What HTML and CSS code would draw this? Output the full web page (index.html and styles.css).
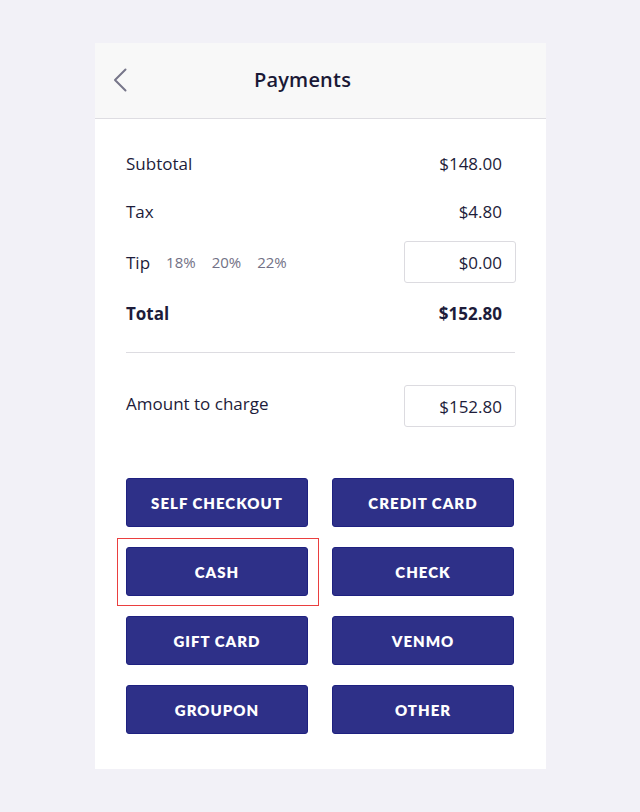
FILE: index.html
```html
<!DOCTYPE html>
<html>
<head>
<meta charset="utf-8">
<link rel="stylesheet" href="styles.css">
</head>
<body>
<div class="card">
  <header class="header">
    <button class="back" aria-label="Back">
      <svg width="14" height="24" viewBox="0 0 14 24"><path d="M12.5 1.5 L2 12 L12.5 22.5" fill="none" stroke="#77768a" stroke-width="2" stroke-linecap="round" stroke-linejoin="round"/></svg>
    </button>
    <h1 class="title">Payments</h1>
  </header>
  <div class="content">
    <div class="summary">
      <div class="row"><span>Subtotal</span><span class="val">$148.00</span></div>
      <div class="row"><span>Tax</span><span class="val">$4.80</span></div>
      <div class="row tip-row">
        <div class="tip-left"><span>Tip</span><span class="pct">18%</span><span class="pct">20%</span><span class="pct">22%</span></div>
        <div class="field">$0.00</div>
      </div>
      <div class="row total"><span>Total</span><span class="val">$152.80</span></div>
    </div>
    <hr class="divider">
    <div class="row charge-row">
      <span class="charge-label">Amount to charge</span>
      <div class="field">$152.80</div>
    </div>
    <div class="buttons">
      <button class="pay">SELF CHECKOUT</button>
      <button class="pay">CREDIT CARD</button>
      <div class="selected-wrap"><button class="pay">CASH</button><span class="ring"></span></div>
      <button class="pay">CHECK</button>
      <button class="pay">GIFT CARD</button>
      <button class="pay">VENMO</button>
      <button class="pay">GROUPON</button>
      <button class="pay">OTHER</button>
    </div>
  </div>
</div>
</body>
</html>
```
FILE: styles.css
```css
* { box-sizing: border-box; }
html, body { margin: 0; padding: 0; }
body {
  background: #f2f1f7;
  font-family: "Open Sans", Lato, sans-serif;
  color: #1d1c3a;
  padding-top: 43px;
  padding-left: 95px;
}
.card {
  width: 451px;
  height: 726px;
  background: #ffffff;
}
.header {
  height: 76px;
  background: #f8f8f8;
  border-bottom: 1px solid #dedde2;
  display: flex;
  align-items: center;
  position: relative;
  justify-content: center;
}
.back {
  position: absolute;
  left: 18px;
  top: 25px;
  background: none;
  border: 0;
  padding: 0;
  display: flex;
}
.title {
  margin: 0 36px 3px 0;
  font-size: 20px;
  font-weight: 600;
  letter-spacing: 0.2px;
  color: #1a1936;
}
.content {
  padding: 20px 30px 0 31px;
}
.row {
  display: flex;
  justify-content: space-between;
  align-items: center;
  font-size: 17px;
}
.val { padding-right: 14px; }
.summary .row { height: 48px; }
.summary .tip-row { height: 54px; }
.tip-left { display: flex; align-items: center; }
.pct {
  font-size: 15px;
  color: #727185;
  margin-left: 16px;
}
.tip-left .pct:first-of-type { margin-left: 20px; }
.field {
  width: 112px;
  height: 42px;
  border: 1px solid #dcdbe0;
  border-radius: 3px;
  display: flex;
  align-items: center;
  justify-content: flex-end;
  padding-right: 13px;
  font-size: 17px;
}
.total { font-weight: 700; }
.divider {
  border: 0;
  border-top: 1px solid #dddce1;
  margin: 15px 1px 0 0;
}
.charge-row {
  margin-top: 32px;
}
.charge-label { margin-top: -5px; }
.buttons {
  display: grid;
  grid-template-columns: 182px 182px;
  column-gap: 24px;
  row-gap: 20px;
  margin-top: 51px;
}
.pay {
  height: 49px;
  width: 100%;
  background: #2e3088;
  border: 1px solid #1e2180;
  border-radius: 3px;
  color: #ffffff;
  font-family: Lato, "Open Sans", sans-serif;
  font-weight: 800;
  font-size: 15px;
  letter-spacing: 1px;
  padding: 0;
}
.selected-wrap {
  position: relative;
  display: flex;
}
.ring {
  position: absolute;
  left: -9px;
  top: -9px;
  right: -11px;
  bottom: -10px;
  border: 1.5px solid #ea3f3f;
  pointer-events: none;
}
```
